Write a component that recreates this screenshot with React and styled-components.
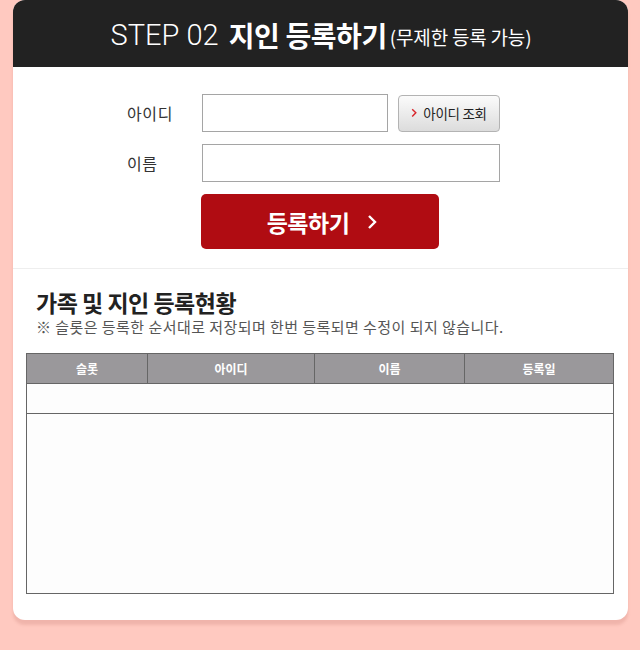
import React from "react";
import styled, { createGlobalStyle } from "styled-components";

const GlobalStyle = createGlobalStyle`
	body {
		margin: 0;
		background: #ffc9c0;
		font-family: "Noto Sans CJK KR", "Noto Sans", sans-serif;
	}
`;

const Page = styled.div`
	width: 640px;
	height: 650px;
	padding: 0 12px 0 13px;
	box-sizing: border-box;
`;
const Card = styled.div`
	background: #fff;
	border-radius: 12px;
	box-shadow: 0 5px 3px rgba(170, 90, 80, 0.18);
	overflow: hidden;
	padding-bottom: 26px;
`;
const Header = styled.div`
	height: 67px;
	background: #222;
	color: #fff;
	display: flex;
	align-items: center;
	justify-content: center;
	padding: 2px 0 0 1px;
	box-sizing: border-box;
	white-space: nowrap;
`;
const Step = styled.span`
	font-family: Roboto, sans-serif;
	font-weight: 300;
	font-size: 29px;
	margin-right: 10px;
`;
const HeadTitle = styled.span`
	font-weight: 700;
	font-size: 28px;
	letter-spacing: -0.4px;
	margin-right: 3px;
`;
const HeadSub = styled.span`
	font-size: 19px;
	letter-spacing: -0.2px;
	margin-top: 4px;
`;

const Form = styled.div`
	display: grid;
	grid-template-columns: 75px 186px 112px;
	grid-template-rows: 38px 38px 55px;
	row-gap: 12px;
	padding: 27px 0 19px 114px;
	border-bottom: 1px solid #eee;
	align-items: center;
`;
const Label = styled.label`
	font-size: 16px;
	color: #333;
	letter-spacing: 0.6px;
`;
const Input = styled.input`
	width: 100%;
	height: 38px;
	box-sizing: border-box;
	border: 1px solid #a5a5a5;
	grid-column: ${(p) => (p.wide ? "2 / 4" : "auto")};
`;
const CheckButton = styled.button`
	margin-left: 10px;
	width: 102px;
	height: 37px;
	border: 1px solid #b3b3b3;
	border-radius: 4px;
	background: linear-gradient(#fbfbfb, #dcdcdc);
	display: flex;
	align-items: center;
	justify-content: center;
	gap: 6px;
	font-family: inherit;
	font-size: 13.5px;
	color: #222;
	letter-spacing: -0.3px;
`;
const SubmitButton = styled.button`
	grid-column: 2 / 4;
	width: 238px;
	height: 55px;
	margin-left: -1px;
	border: none;
	border-radius: 5px;
	background: #b00c12;
	color: #fff;
	font-family: inherit;
	font-size: 23px;
	font-weight: 700;
	letter-spacing: -0.5px;
	display: flex;
	align-items: center;
	justify-content: center;
	gap: 18px;
	padding-left: 10px;
`;

const Status = styled.div`
	padding: 18px 14px 0 13px;
`;
const Title = styled.h2`
	margin: 0 0 0 10px;
	font-size: 23px;
	font-weight: 700;
	color: #222;
	letter-spacing: -0.5px;
	line-height: 30px;
`;
const Note = styled.p`
	margin: 0 0 16px 10px;
	font-size: 15px;
	color: #555;
	letter-spacing: 0.45px;
	line-height: 20px;
	white-space: nowrap;
`;
const Table = styled.table`
	width: 588px;
	border-collapse: collapse;
	table-layout: fixed;
	border: 1px solid #666;
`;
const Th = styled.th`
	height: 29px;
	background: #9a989b;
	color: #fff;
	font-size: 12px;
	font-weight: 700;
	border: 1px solid #666;
	padding: 0;
	width: ${(p) => (p.w ? `${p.w}px` : "auto")};
`;
const Td = styled.td`
	height: ${(p) => p.h}px;
	padding: 0;
	background: #fdfdfd;
	border: 1px solid #666;
	border-left: none;
	border-right: none;
`;

const Chevron = ({ size, color, width }) => (
	<svg width={size} height={size * 1.6} viewBox="0 0 10 16">
		<path d="M2 2l6 6-6 6" fill="none" stroke={color} strokeWidth={width} />
	</svg>
);

const columns = [
	{ label: "슬롯", w: 120 },
	{ label: "아이디", w: 166 },
	{ label: "이름", w: 149 },
	{ label: "등록일" },
];

const App = () => {
	return (
		<Page>
			<GlobalStyle />
			<Card>
				<Header>
					<Step>STEP 02</Step>
					<HeadTitle>지인 등록하기</HeadTitle>
					<HeadSub>(무제한 등록 가능)</HeadSub>
				</Header>
				<Form>
					<Label>아이디</Label>
					<Input />
					<CheckButton>
						<Chevron size={6} color="#d9262c" width={2.4} />
						아이디 조회
					</CheckButton>
					<Label>이름</Label>
					<Input wide />
					<span />
					<SubmitButton>
						등록하기
						<Chevron size={10} color="#fff" width={2.4} />
					</SubmitButton>
				</Form>
				<Status>
					<Title>가족 및 지인 등록현황</Title>
					<Note>※ 슬롯은 등록한 순서대로 저장되며 한번 등록되면 수정이 되지 않습니다.</Note>
					<Table>
						<thead>
							<tr>
								{columns.map((c) => (
									<Th key={c.label} w={c.w}>{c.label}</Th>
								))}
							</tr>
						</thead>
						<tbody>
							<tr>
								<Td colSpan={4} h={29} />
							</tr>
							<tr>
								<Td colSpan={4} h={179} />
							</tr>
						</tbody>
					</Table>
				</Status>
			</Card>
		</Page>
	);
};

export default App;
